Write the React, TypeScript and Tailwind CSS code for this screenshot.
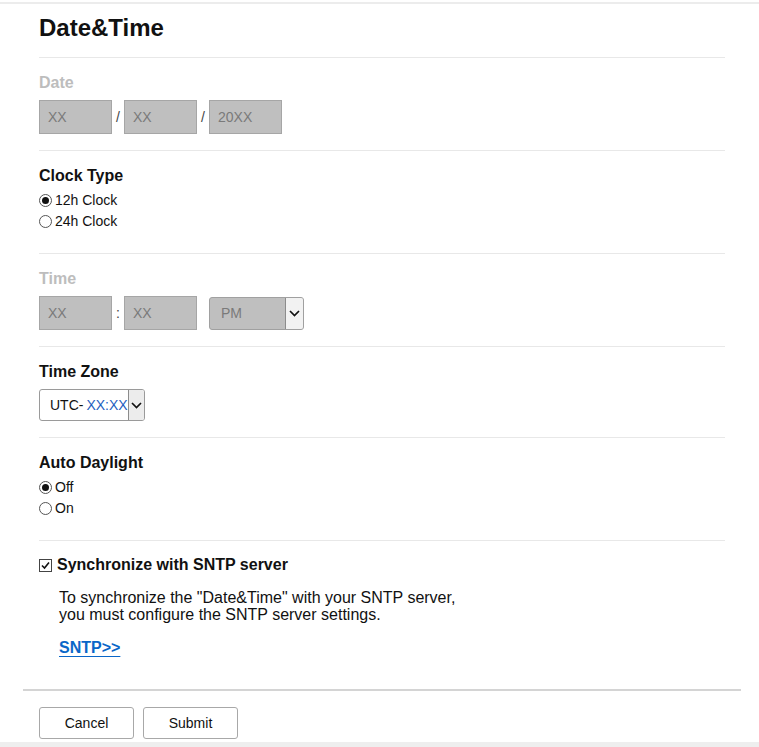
import React from "react";

const Chevron = () => (
  <svg width="11" height="7" viewBox="0 0 11 7" fill="none">
    <path d="M1 1 L5.5 5.5 L10 1" stroke="#111" strokeWidth="1.7" />
  </svg>
);

const Radio = ({ checked, label }: { checked?: boolean; label: string }) => (
  <div className="flex items-center h-[21px]">
    <span className="w-[13px] h-[13px] rounded-full border border-[#555] bg-white flex items-center justify-center">
      {checked && <span className="w-[7px] h-[7px] rounded-full bg-[#111]" />}
    </span>
    <span className="ml-[3px] text-[14px] text-[#111]">{label}</span>
  </div>
);

const GrayBox = ({ text }: { text: string }) => (
  <div className="w-[73px] h-[34px] bg-[#bfbfbf] border border-[#a6a6a6] flex items-center pl-2 text-[14px] text-[#7a7a7a]">
    {text}
  </div>
);

const Sep = ({ ch }: { ch: string }) => (
  <div className="w-[12px] text-center text-[14px] text-[#444]">{ch}</div>
);

const Label = ({ children, muted }: { children: React.ReactNode; muted?: boolean }) => (
  <div className={`text-[16px] leading-[18px] font-bold ${muted ? "text-[#bdbdbd]" : "text-[#111]"}`}>{children}</div>
);

export default function App() {
  return (
    <div className="w-[759px] h-[747px] bg-white flex flex-col font-['Liberation_Sans',Arial,sans-serif] text-[#111]">
      <div className="h-[2px] mt-[2px] bg-[#ececec]" />
      <div className="ml-[23px] mr-[18px] flex-1 flex flex-col">
        <div className="px-4">
          <h1 className="text-[24px] leading-[28px] font-bold pt-[10px] pb-[15px] text-[#111]">Date&amp;Time</h1>

          <section className="border-t border-[#e8e8e8] pt-4 pb-4">
            <Label muted>Date</Label>
            <div className="mt-2 flex items-center">
              <GrayBox text="XX" />
              <Sep ch="/" />
              <GrayBox text="XX" />
              <Sep ch="/" />
              <GrayBox text="20XX" />
            </div>
          </section>

          <section className="border-t border-[#e8e8e8] pt-4 pb-[21px]">
            <Label>Clock Type</Label>
            <div className="mt-[5px]">
              <Radio checked label="12h Clock" />
              <Radio label="24h Clock" />
            </div>
          </section>

          <section className="border-t border-[#e8e8e8] pt-4 pb-4">
            <Label muted>Time</Label>
            <div className="mt-2 flex items-center">
              <GrayBox text="XX" />
              <Sep ch=":" />
              <GrayBox text="XX" />
              <div className="ml-[12px] w-[95px] h-[33px] rounded-[3px] border border-[#a0a0a0] bg-[#bfbfbf] flex overflow-hidden">
                <div className="flex-1 flex items-center pl-[11px] text-[14px] text-[#7a7a7a]">PM</div>
                <div className="w-[18px] bg-[#f2f2f2] border-l border-[#8c8c8c] flex items-center justify-center">
                  <Chevron />
                </div>
              </div>
            </div>
          </section>

          <section className="border-t border-[#e8e8e8] pt-4 pb-4">
            <Label>Time Zone</Label>
            <div className="mt-2 w-[106px] h-[32px] rounded-[3px] border border-[#9a9a9a] bg-white flex overflow-hidden">
              <div className="flex-1 flex items-center pl-[10px] text-[14px] whitespace-nowrap">
                <span className="text-[#111]">UTC-</span>
                <span className="ml-[3px] text-[#1f5fbf]">XX:XX</span>
              </div>
              <div className="w-[19px] bg-[#ececec] border-l border-[#8c8c8c] flex items-center justify-center">
                <Chevron />
              </div>
            </div>
          </section>

          <section className="border-t border-[#e8e8e8] pt-4 pb-[21px]">
            <Label>Auto Daylight</Label>
            <div className="mt-[5px]">
              <Radio checked label="Off" />
              <Radio label="On" />
            </div>
          </section>

          <section className="border-t border-[#e8e8e8] pt-[15px] pb-[32px]">
            <div className="flex items-center h-[18px]">
              <span className="w-[13px] h-[13px] border border-[#444] bg-white flex items-center justify-center">
                <svg width="11" height="11" viewBox="0 0 11 11" fill="none">
                  <path d="M2 5.5 L4.5 8 L9 2.5" stroke="#111" strokeWidth="1.6" />
                </svg>
              </span>
              <span className="ml-[5px] text-[16px] font-bold text-[#111]">Synchronize with SNTP server</span>
            </div>
            <div className="pl-5 mt-[15px] text-[16px] leading-[17px] text-[#111]">
              <p>To synchronize the "Date&amp;Time" with your SNTP server,</p>
              <p>you must configure the SNTP server settings.</p>
            </div>
            <div className="pl-5 mt-[16px] leading-[18px]">
              <a href="#" className="text-[16px] font-bold text-[#0a66c8] underline underline-offset-[3px]">SNTP&gt;&gt;</a>
            </div>
          </section>
        </div>

        <div className="border-t-2 border-[#d4d4d4] px-4 pt-[16px] flex gap-[9px]">
          <button className="w-[95px] h-[32px] rounded-[3px] border border-[#a8a8a8] bg-white text-[14px] text-[#111]">Cancel</button>
          <button className="w-[95px] h-[32px] rounded-[3px] border border-[#a8a8a8] bg-white text-[14px] text-[#111]">Submit</button>
        </div>
      </div>
      <div className="h-[5px] bg-[#eeeeee]" />
    </div>
  );
}
